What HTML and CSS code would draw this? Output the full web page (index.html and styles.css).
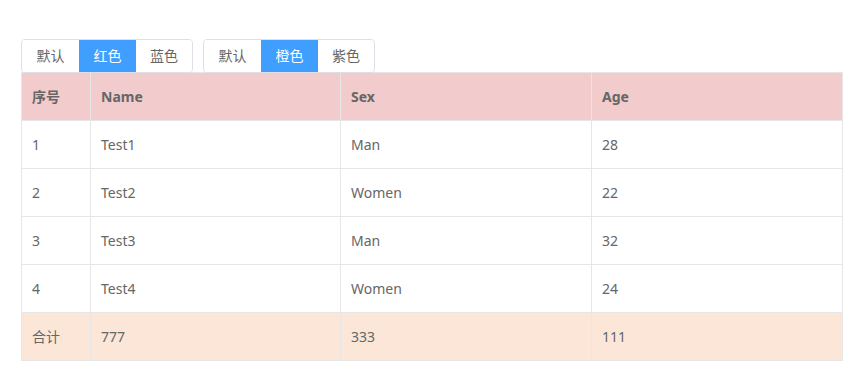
FILE: index.html
```html
<!DOCTYPE html>
<html lang="zh">
<head>
<meta charset="utf-8">
<link rel="stylesheet" href="styles.css">
</head>
<body>
<div class="page">
  <div class="toolbar">
    <div class="btn-group">
      <button class="btn">默认</button>
      <button class="btn active">红色</button>
      <button class="btn">蓝色</button>
    </div>
    <div class="btn-group">
      <button class="btn">默认</button>
      <button class="btn active">橙色</button>
      <button class="btn">紫色</button>
    </div>
  </div>
  <table class="data-table">
    <colgroup>
      <col class="c-idx"><col class="c-name"><col class="c-sex"><col>
    </colgroup>
    <thead>
      <tr><th>序号</th><th>Name</th><th>Sex</th><th>Age</th></tr>
    </thead>
    <tbody>
      <tr><td>1</td><td>Test1</td><td>Man</td><td>28</td></tr>
      <tr><td>2</td><td>Test2</td><td>Women</td><td>22</td></tr>
      <tr><td>3</td><td>Test3</td><td>Man</td><td>32</td></tr>
      <tr><td>4</td><td>Test4</td><td>Women</td><td>24</td></tr>
    </tbody>
    <tfoot>
      <tr><td>合计</td><td>777</td><td>333</td><td>111</td></tr>
    </tfoot>
  </table>
</div>
</body>
</html>
```
FILE: styles.css
```css
* { box-sizing: border-box; }
html, body { margin: 0; padding: 0; background: #fff; }
body {
  font-family: "Noto Sans", "Noto Sans CJK SC", sans-serif;
  font-size: 14px;
  color: #666;
}
.page { padding: 39px 0 0 21px; width: 843px; }
.toolbar { display: flex; gap: 10px; }
.btn-group {
  display: flex;
  border: 1px solid #dcdfe6;
  border-radius: 4px;
  overflow: hidden;
  height: 34px;
}
.btn {
  font: inherit;
  font-size: 14px;
  color: #666;
  background: #fff;
  border: 0;
  width: 57px;
  height: 32px;
  padding: 0;
  line-height: 32px;
}
.btn:last-child { width: 56px; }
.btn.active { background: #409eff; color: #fff; }
.data-table {
  width: 822px;
  border-collapse: collapse;
  table-layout: fixed;
  margin-top: -1px;
}
.c-idx { width: 69px; }
.c-name { width: 250px; }
.c-sex { width: 251px; }
.data-table th, .data-table td {
  border: 1px solid #e6e6e6;
  height: 48px;
  padding: 0 10px;
  text-align: left;
  font-size: 14px;
  line-height: 20px;
}
.data-table th { font-weight: bold; background: #f2cccc; }
.data-table tfoot td { background: #fbe6d7; }
```
